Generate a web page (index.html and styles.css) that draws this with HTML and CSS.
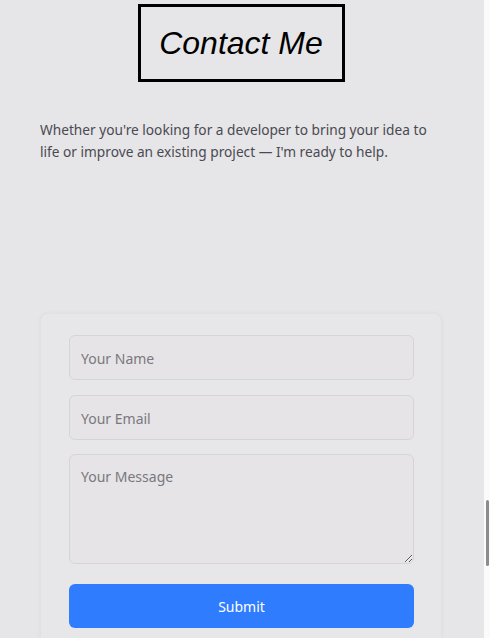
FILE: index.html
```html
<!DOCTYPE html>
<html lang="en">
<head>
<meta charset="utf-8">
<title>Contact Me</title>
<link rel="stylesheet" href="styles.css">
</head>
<body>
<main class="page">
  <header class="title-wrap">
    <h1 class="title">Contact Me</h1>
  </header>
  <p class="intro">Whether you're looking for a developer to bring your idea to life or improve an existing project — I'm ready to help.</p>
  <form class="card">
    <input class="field" type="text" placeholder="Your Name">
    <input class="field" type="email" placeholder="Your Email">
    <textarea class="field message" placeholder="Your Message"></textarea>
    <button class="submit" type="button">Submit</button>
  </form>
</main>
<div class="scrollbar"><div class="thumb"></div></div>
</body>
</html>
```
FILE: styles.css
```css
* { box-sizing: border-box; }
html, body {
  margin: 0;
  height: 100%;
  background: #e6e5e7;
  overflow: hidden;
}
body {
  font-family: "Noto Sans", "Open Sans", sans-serif;
  color: #4a4a52;
}
.page {
  width: 484px;
  padding: 4px 42px 0 40px;
}
.title-wrap {
  display: flex;
  justify-content: center;
}
.title {
  margin: 0;
  width: 207px;
  height: 78px;
  border: 3px solid #000;
  display: flex;
  align-items: center;
  justify-content: center;
  font-family: "Liberation Sans", Arial, sans-serif;
  font-style: italic;
  font-weight: normal;
  font-size: 32px;
  color: #000;
  padding-top: 1px;
}
.intro {
  margin: 37px 0 0;
  font-size: 13.7px;
  line-height: 22px;
  color: #4a4a52;
}
.card {
  margin-top: 150px;
  display: flex;
  flex-direction: column;
  padding: 21px 27px 0 28px;
  border: 1px solid #e1e0e3;
  border-bottom: none;
  border-radius: 8px 8px 0 0;
  background: #e7e6e8;
  box-shadow: 0 0 4px rgba(0,0,0,0.04);
  height: 330px;
}
.field {
  display: block;
  width: 100%;
  height: 45px;
  margin: 0 0 15px;
  padding: 1px 11px 0;
  border: 1px solid #d6d4d8;
  border-radius: 6px;
  background: #e6e4e7;
  font-family: "Noto Sans", "Open Sans", sans-serif;
  font-size: 14px;
  color: #444;
  outline: none;
}
.field::placeholder { color: #7a787d; }
.message {
  height: 110px;
  padding: 12px 11px;
  resize: vertical;
  margin-bottom: 20px;
  margin-top: -1px;
}
.submit {
  display: block;
  width: 100%;
  height: 44px;
  border: none;
  border-radius: 6px;
  background: #2f7cff;
  color: #fff;
  font-family: "Noto Sans", "Open Sans", sans-serif;
  font-size: 14px;
  cursor: pointer;
}
.scrollbar {
  position: fixed;
  top: 0;
  right: 0;
  width: 6px;
  height: 100%;
  background: #fbfbfb;
}
.thumb {
  position: absolute;
  top: 500px;
  left: 2px;
  width: 3px;
  height: 66px;
  border-radius: 2px;
  background: #8c8c8c;
}
```
